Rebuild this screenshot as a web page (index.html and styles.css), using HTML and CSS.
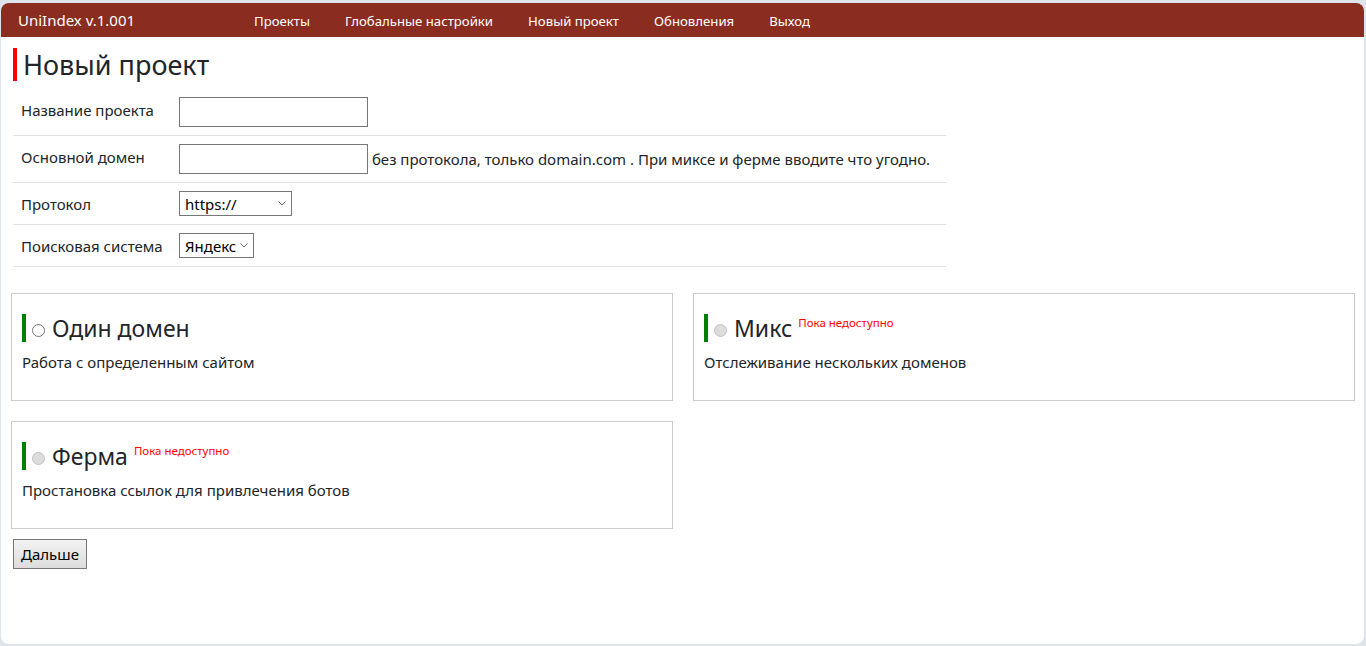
FILE: index.html
```html
<!DOCTYPE html>
<html lang="ru">
<head>
    <meta charset="UTF-8">
    <title>UniIndex - Новый проект</title>
    <link rel="stylesheet" href="styles.css">
</head>
<body>
    <div class="window">
        <nav class="navbar">
            <span class="brand">UniIndex v.1.001</span>
            <ul class="nav-links">
                <li><a href="#">Проекты</a></li>
                <li><a href="#">Глобальные настройки</a></li>
                <li><a href="#">Новый проект</a></li>
                <li><a href="#">Обновления</a></li>
                <li><a href="#">Выход</a></li>
            </ul>
        </nav>

        <main class="content">
            <h1 class="page-title">Новый проект</h1>

            <table class="form-table">
                <colgroup>
                    <col class="label-col">
                    <col>
                </colgroup>
                <tr>
                    <td class="label">Название проекта</td>
                    <td><input type="text" class="text-input"></td>
                </tr>
                <tr>
                    <td class="label">Основной домен</td>
                    <td><input type="text" class="text-input"> <span class="hint">без протокола, только domain.com . При миксе и ферме вводите что угодно.</span></td>
                </tr>
                <tr>
                    <td class="label">Протокол</td>
                    <td><select class="select protocol">
                            <option>https://</option>
                            <option>http://</option>
                        </select></td>
                </tr>
                <tr>
                    <td class="label">Поисковая система</td>
                    <td><select class="select">
                            <option>Яндекс</option>
                            <option>Google</option>
                        </select></td>
                </tr>
            </table>

            <div class="modes">
                <div class="mode-card">
                    <h3 class="mode-title"><input type="radio" name="mode"> Один домен</h3>
                    <p>Работа с определенным сайтом</p>
                </div>
                <div class="mode-card">
                    <h3 class="mode-title"><input type="radio" name="mode" disabled> Микс <span class="soon">Пока недоступно</span></h3>
                    <p>Отслеживание нескольких доменов</p>
                </div>
                <div class="mode-card">
                    <h3 class="mode-title"><input type="radio" name="mode" disabled> Ферма <span class="soon">Пока недоступно</span></h3>
                    <p>Простановка ссылок для привлечения ботов</p>
                </div>
            </div>

            <button class="next-btn">Дальше</button>
        </main>
    </div>
</body>
</html>
```

FILE: styles.css
```css
html, body {
    margin: 0;
    height: 100%;
}

body {
    background: #dde4ec;
    font-family: "Noto Sans", "Open Sans", sans-serif;
    font-size: 15px;
    color: #212529;
    padding: 3px 2px 2px 1px;
    box-sizing: border-box;
}

.window {
    background: #ffffff;
    height: 100%;
    border-radius: 8px;
    overflow: hidden;
}

.navbar {
    background: #8b2c21;
    height: 34px;
    display: flex;
    align-items: center;
    padding-left: 17px;
}

.brand {
    color: #ffffff;
    font-size: 15px;
    width: 236px;
}

.nav-links {
    list-style: none;
    margin: 0;
    padding: 0;
    display: flex;
    gap: 35px;
}

.nav-links a {
    color: #ffffff;
    text-decoration: none;
    font-size: 13.2px;
}

.content {
    padding: 11px 12px 10px 12px;
}

.page-title {
    margin: 0 0 8px 0;
    font-size: 27px;
    font-weight: 400;
    line-height: 33px;
    border-left: 4px solid #ff0000;
    padding-left: 6px;
}

.form-table {
    border-collapse: collapse;
    table-layout: fixed;
    width: 933px;
}

.label-col {
    width: 158px;
}

.form-table td {
    border-bottom: 1px solid #dee2e6;
    padding: 8px;
    vertical-align: middle;
    white-space: nowrap;
}

.form-table td.label {
    vertical-align: top;
    padding-top: 11px;
    line-height: 20px;
}

.text-input {
    width: 189px;
    height: 30px;
    box-sizing: border-box;
    border: 1px solid #767676;
    border-radius: 0;
    margin: 0;
    font-size: 15px;
    vertical-align: middle;
}

.hint {
    vertical-align: middle;
}

.select {
    appearance: none;
    -webkit-appearance: none;
    height: 25px;
    font-family: inherit;
    font-size: 15px;
    border: 1px solid #767676;
    border-radius: 0;
    color: #000000;
    margin: 0;
    padding: 0 16px 0 5px;
    vertical-align: middle;
    background: #ffffff url("data:image/svg+xml,%3Csvg xmlns='http://www.w3.org/2000/svg' width='8' height='5' viewBox='0 0 8 5'%3E%3Cpath d='M0.5 0.5L4 4L7.5 0.5' fill='none' stroke='%23666' stroke-width='1'/%3E%3C/svg%3E") no-repeat right 5px center;
}

.select.protocol {
    width: 113px;
}

.modes {
    display: grid;
    grid-template-columns: 662px 662px;
    gap: 20px;
    margin: 26px 0 10px -2px;
}

.mode-card {
    border: 1px solid #cccccc;
    padding: 20px 10px 28px 10px;
}

.mode-title {
    margin: 0 0 10px 0;
    font-size: 23px;
    font-weight: 400;
    line-height: 28px;
    border-left: 4px solid #008000;
    padding-left: 6px;
    display: flex;
    align-items: center;
    gap: 7px;
}

.mode-title input {
    appearance: none;
    -webkit-appearance: none;
    width: 13px;
    height: 13px;
    margin: 4px 0 0 0;
    border: 1px solid #767676;
    border-radius: 50%;
    background: #ffffff;
    box-sizing: border-box;
}

.mode-title input:disabled {
    border-color: #c2c2c2;
    background: #dcdcdc;
}

.soon {
    color: #ff0000;
    font-size: 11.5px;
    align-self: flex-start;
    line-height: 18px;
    margin-left: -1px;
}

.mode-card p {
    margin: 0;
    line-height: 20px;
}

.next-btn {
    font-family: inherit;
    font-size: 15px;
    color: #000000;
    height: 30px;
    padding: 0 7px;
    border: 1px solid #767676;
    border-radius: 0;
    background: linear-gradient(#f2f2f2, #dddddd);
}
```
